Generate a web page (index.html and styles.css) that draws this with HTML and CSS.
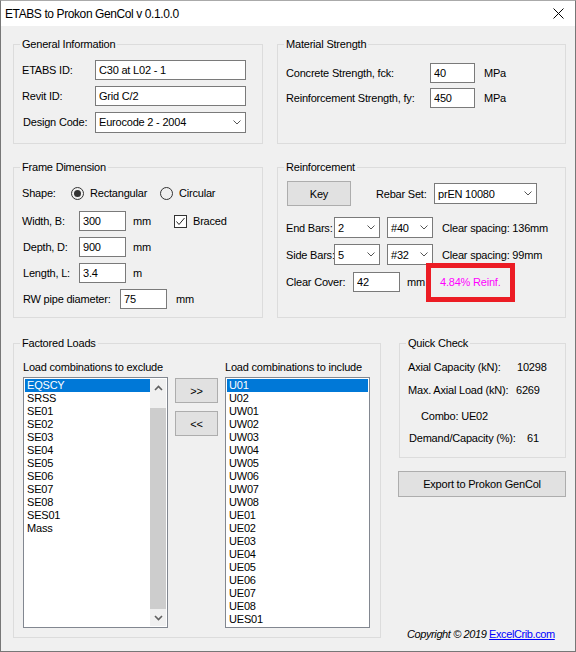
FILE: index.html
```html
<!DOCTYPE html>
<html>

<head>
    <meta charset="UTF-8">
    <meta name="viewport" content="width=device-width, initial-scale=1.0">
    <title>ETABS to Prokon GenCol</title>

    <link rel="stylesheet" href="styles.css">
</head>

<body>
    <div class="window">
        <div class="titlebar">
            <span class="title">ETABS to Prokon GenCol v 0.1.0.0</span>
            <svg class="close" width="11" height="11" viewBox="0 0 11 11">
                <path d="M0.5,0.5L10.5,10.5M10.5,0.5L0.5,10.5" stroke="#000" stroke-width="1" fill="none" />
            </svg>
        </div>

        <div class="client">
            <div class="row row-top">
                <div class="group general">
                    <div class="legend">General Information</div>
                    <div class="field"><span class="lbl w73">ETABS ID:</span><input class="text w151" type="text" value="C30 at L02 - 1"></div>
                    <div class="field"><span class="lbl w73">Revit ID:</span><input class="text w151" type="text" value="Grid C/2"></div>
                    <div class="field"><span class="lbl w73 nudge">Design Code:</span>
                        <div class="combo w151"><span>Eurocode 2 - 2004</span><svg width="8" height="5" viewBox="0 0 8 5"><path d="M0.5,0.5L4,4L7.5,0.5" stroke="#555" fill="none" /></svg></div>
                    </div>
                </div>

                <div class="group material">
                    <div class="legend">Material Strength</div>
                    <div class="field field-tight"><span class="lbl w144">Concrete Strength, fck:</span><input class="text w45" type="text" value="40"><span class="unit u9">MPa</span></div>
                    <div class="field field-tight"><span class="lbl w144">Reinforcement Strength, fy:</span><input class="text w45" type="text" value="450"><span class="unit u9">MPa</span></div>
                </div>
            </div>

            <div class="row row-mid">
                <div class="group frame">
                    <div class="legend">Frame Dimension</div>
                    <div class="field shape-row">
                        <span class="lbl w49">Shape:</span>
                        <span class="option w89"><span class="radio checked"></span>Rectangular</span>
                        <span class="option"><span class="radio"></span>Circular</span>
                    </div>
                    <div class="field"><span class="lbl w57">Width, B:</span><input class="text w47" type="text" value="300"><span class="unit u7 w41">mm</span>
                        <span class="option"><span class="check">
                            <svg width="11" height="11" viewBox="0 0 11 11"><path d="M1.5,5.5L4,8.5L9.5,2" stroke="#222" stroke-width="1" fill="none" /></svg>
                        </span>Braced</span>
                    </div>
                    <div class="field"><span class="lbl w57 nudge">Depth, D:</span><input class="text w47" type="text" value="900"><span class="unit u7">mm</span></div>
                    <div class="field"><span class="lbl w57 nudge">Length, L:</span><input class="text w47" type="text" value="3.4"><span class="unit u7">m</span></div>
                    <div class="field"><span class="lbl w98 nudge">RW pipe diameter:</span><input class="text w47" type="text" value="75"><span class="unit u9">mm</span></div>
                </div>

                <div class="group reinforcement">
                    <div class="legend">Reinforcement</div>
                    <div class="field key-row">
                        <div class="button key">Key</div>
                        <span class="lbl w58 rebar-lbl">Rebar Set:</span>
                        <div class="combo w103"><span>prEN 10080</span><svg width="8" height="5" viewBox="0 0 8 5"><path d="M0.5,0.5L4,4L7.5,0.5" stroke="#555" fill="none" /></svg></div>
                    </div>
                    <div class="field bars-row">
                        <span class="lbl w48 pull">End Bars:</span>
                        <div class="combo w46"><span>2</span><svg width="8" height="5" viewBox="0 0 8 5"><path d="M0.5,0.5L4,4L7.5,0.5" stroke="#555" fill="none" /></svg></div>
                        <div class="combo w46 second"><span>#40</span><svg width="8" height="5" viewBox="0 0 8 5"><path d="M0.5,0.5L4,4L7.5,0.5" stroke="#555" fill="none" /></svg></div>
                        <span class="spacing">Clear spacing: 136mm</span>
                    </div>
                    <div class="field bars-row side">
                        <span class="lbl w48 pull">Side Bars:</span>
                        <div class="combo w46"><span>5</span><svg width="8" height="5" viewBox="0 0 8 5"><path d="M0.5,0.5L4,4L7.5,0.5" stroke="#555" fill="none" /></svg></div>
                        <div class="combo w46 second"><span>#32</span><svg width="8" height="5" viewBox="0 0 8 5"><path d="M0.5,0.5L4,4L7.5,0.5" stroke="#555" fill="none" /></svg></div>
                        <span class="spacing">Clear spacing: 99mm</span>
                    </div>
                    <div class="field cover-row">
                        <span class="lbl w67 pull">Clear Cover:</span>
                        <input class="text w47" type="text" value="42">
                        <span class="unit u7 w19">mm</span>
                        <div class="highlight"><span class="ratio">4.84% Reinf.</span></div>
                    </div>
                </div>
            </div>

            <div class="row row-bottom">
                <div class="group loads">
                    <div class="legend">Factored Loads</div>
                    <div class="loads-grid">
                        <div class="list-col">
                            <div class="list-lbl">Load combinations to exclude</div>
                            <div class="listbox">
                                <div class="items">
                                    <div class="item selected">EQSCY</div>
                                    <div class="item">SRSS</div>
                                    <div class="item">SE01</div>
                                    <div class="item">SE02</div>
                                    <div class="item">SE03</div>
                                    <div class="item">SE04</div>
                                    <div class="item">SE05</div>
                                    <div class="item">SE06</div>
                                    <div class="item">SE07</div>
                                    <div class="item">SE08</div>
                                    <div class="item">SES01</div>
                                    <div class="item">Mass</div>
                                </div>
                                <div class="scrollbar">
                                    <div class="sb-arrow"><svg width="9" height="6" viewBox="0 0 9 6"><path d="M1,5L4.5,1.5L8,5" stroke="#606060" stroke-width="1.6" fill="none" /></svg></div>
                                    <div class="sb-track"><div class="sb-thumb"></div></div>
                                    <div class="sb-arrow"><svg width="9" height="6" viewBox="0 0 9 6"><path d="M1,1L4.5,4.5L8,1" stroke="#606060" stroke-width="1.6" fill="none" /></svg></div>
                                </div>
                            </div>
                        </div>

                        <div class="move-col">
                            <div class="button move">&gt;&gt;</div>
                            <div class="button move">&lt;&lt;</div>
                        </div>

                        <div class="list-col">
                            <div class="list-lbl">Load combinations to include</div>
                            <div class="listbox">
                                <div class="items">
                                    <div class="item selected">U01</div>
                                    <div class="item">U02</div>
                                    <div class="item">UW01</div>
                                    <div class="item">UW02</div>
                                    <div class="item">UW03</div>
                                    <div class="item">UW04</div>
                                    <div class="item">UW05</div>
                                    <div class="item">UW06</div>
                                    <div class="item">UW07</div>
                                    <div class="item">UW08</div>
                                    <div class="item">UE01</div>
                                    <div class="item">UE02</div>
                                    <div class="item">UE03</div>
                                    <div class="item">UE04</div>
                                    <div class="item">UE05</div>
                                    <div class="item">UE06</div>
                                    <div class="item">UE07</div>
                                    <div class="item">UE08</div>
                                    <div class="item">UES01</div>
                                </div>
                            </div>
                        </div>
                    </div>
                </div>

                <div class="side-col">
                    <div class="group quick">
                        <div class="legend">Quick Check</div>
                        <div class="qc-row"><span class="qc-lbl w109">Axial Capacity (kN):</span><span>10298</span></div>
                        <div class="qc-row r2"><span class="qc-lbl w108">Max. Axial Load (kN):</span><span>6269</span></div>
                        <div class="qc-row r3">Combo: UE02</div>
                        <div class="qc-row r4"><span class="qc-lbl w118 push">Demand/Capacity (%):</span><span>61</span></div>
                    </div>
                    <div class="button export">Export to Prokon GenCol</div>
                    <div class="copyright"><em>Copyright © 2019</em> <a href="#">ExcelCrib.com</a></div>
                </div>
            </div>
        </div>
    </div>
</body>

</html>
```

FILE: styles.css
```css
* { box-sizing: border-box; margin: 0; padding: 0; }

body { font-family: "Liberation Sans", Arial, sans-serif; font-size: 11px; letter-spacing: -0.2px; color: #000; background: #fff; }

.window { width: 576px; height: 652px; border: 1px solid #777; border-top-color: #aaa; background: #f0f0f0; display: flex; flex-direction: column; }

.titlebar { height: 25px; background: #fff; display: flex; align-items: center; justify-content: space-between; padding: 0 11px 0 4px; font-size: 12px; }
.title { letter-spacing: -0.4px; }
.close { display: block; }

.client { flex: 1; padding: 18px 9px 0 12px; }

.row { display: flex; }
.row-top { gap: 14px; }
.row-mid { gap: 14px; margin-top: 23px; }
.row-bottom { gap: 18px; margin-top: 25px; }

.group { position: relative; border: 1px solid #dcdcdc; flex: none; }
.legend { position: absolute; top: -7px; left: 6px; padding: 0 2px; line-height: 13px; background: #f0f0f0; white-space: nowrap; }

.field { display: flex; align-items: center; height: 20px; margin-bottom: 6px; }
.field-tight { margin-bottom: 5px; }
.lbl { flex: none; white-space: nowrap; }
.nudge { padding-left: 1px; }
.pull { margin-left: -1px; }

.w19 { width: 19px; } .w41 { width: 41px; } .w45 { width: 45px; } .w46 { width: 46px; } .w47 { width: 47px; } .w48 { width: 48px; }
.w49 { width: 49px; } .w57 { width: 57px; } .w58 { width: 58px; } .w67 { width: 67px; } .w73 { width: 73px; }
.w89 { width: 89px; } .w98 { width: 98px; } .w103 { width: 103px; } .w108 { width: 108px; } .w109 { width: 109px; }
.w118 { width: 118px; } .w144 { width: 144px; } .w151 { width: 151px; }

.text { height: 20px; border: 1px solid #7a7a7a; padding: 0 3px; background: #fff; font: inherit; letter-spacing: inherit; color: #000; outline: none; flex: none; }
.unit { flex: none; }
.u7 { margin-left: 7px; }
.u9 { margin-left: 9px; }

.combo { height: 21px; display: flex; align-items: center; justify-content: space-between; border: 1px solid #7a7a7a; background: #fff; padding: 0 4px 0 3px; flex: none; }
.combo svg { display: block; }

.general { width: 250px; height: 100px; padding: 15px 8px 0; }
.material { width: 289px; height: 100px; padding: 18px 8px 0; }

.frame { width: 250px; height: 151px; padding: 15px 8px 0; }
.shape-row { margin-bottom: 8px; }
.option { display: flex; align-items: center; flex: none; white-space: nowrap; }
.radio { width: 13px; height: 13px; border: 1px solid #333; border-radius: 50%; margin-right: 6px; display: flex; align-items: center; justify-content: center; }
.radio.checked::after { content: ""; width: 7px; height: 7px; border-radius: 50%; background: #333; }
.check { width: 13px; height: 13px; border: 1px solid #333; margin-right: 6px; background: #fff; display: flex; align-items: center; justify-content: center; }
.check svg { display: block; }

.reinforcement { width: 289px; height: 151px; padding: 13px 8px 0 9px; }
.key-row { height: 25px; margin-bottom: 11px; }
.button { background: #e1e1e1; border: 1px solid #adadad; display: flex; align-items: center; justify-content: center; flex: none; }
.key { width: 64px; height: 25px; }
.rebar-lbl { margin-left: 25px; }
.bars-row { height: 21px; }
.bars-row .second { margin-left: 7px; }
.spacing { margin-left: 9px; white-space: nowrap; }
.cover-row { margin-top: 7px; }
.highlight { margin: -10px 0; width: 89px; height: 39px; border: 5px solid #ec1c24; display: flex; align-items: center; padding-left: 9px; flex: none; }
.ratio { color: #ff00ff; white-space: nowrap; }

.loads { width: 368px; height: 295px; padding: 17px 9px 0; }
.loads-grid { display: flex; }
.list-col { width: 145px; flex: none; }
.list-lbl { line-height: 13px; margin-bottom: 3px; white-space: nowrap; }
.listbox { height: 251px; border: 1px solid #828790; background: #fff; padding: 1px; display: flex; }
.items { flex: 1; }
.item { height: 13px; line-height: 13px; padding-left: 2px; }
.item.selected { background: #0078d7; color: #fff; }

.scrollbar { width: 16px; background: #f0f0f0; display: flex; flex-direction: column; }
.sb-arrow { height: 17px; display: flex; align-items: center; justify-content: center; }
.sb-arrow svg { display: block; }
.sb-track { flex: 1; padding-top: 12px; display: flex; }
.sb-thumb { flex: 1; background: #cdcdcd; }

.move-col { margin: 17px 7px 0; display: flex; flex-direction: column; gap: 8px; }
.move { width: 43px; height: 25px; }

.side-col { width: 167px; flex: none; display: flex; flex-direction: column; }
.quick { height: 115px; padding: 17px 8px 0; }
.qc-row { display: flex; line-height: 13px; white-space: nowrap; }
.qc-lbl { flex: none; }
.r2 { margin-top: 10px; }
.r3 { margin-top: 13px; padding-left: 13px; }
.r4 { margin-top: 9px; }
.push { margin-left: 1px; }

.export { height: 26px; margin-top: 13px; margin-left: -1px; }

.copyright { margin-top: auto; margin-bottom: -3px; padding-left: 8px; line-height: 14px; white-space: nowrap; letter-spacing: -0.4px; }
.copyright em { font-style: italic; }
.copyright a { color: #0000ff; text-decoration: underline; }
```
